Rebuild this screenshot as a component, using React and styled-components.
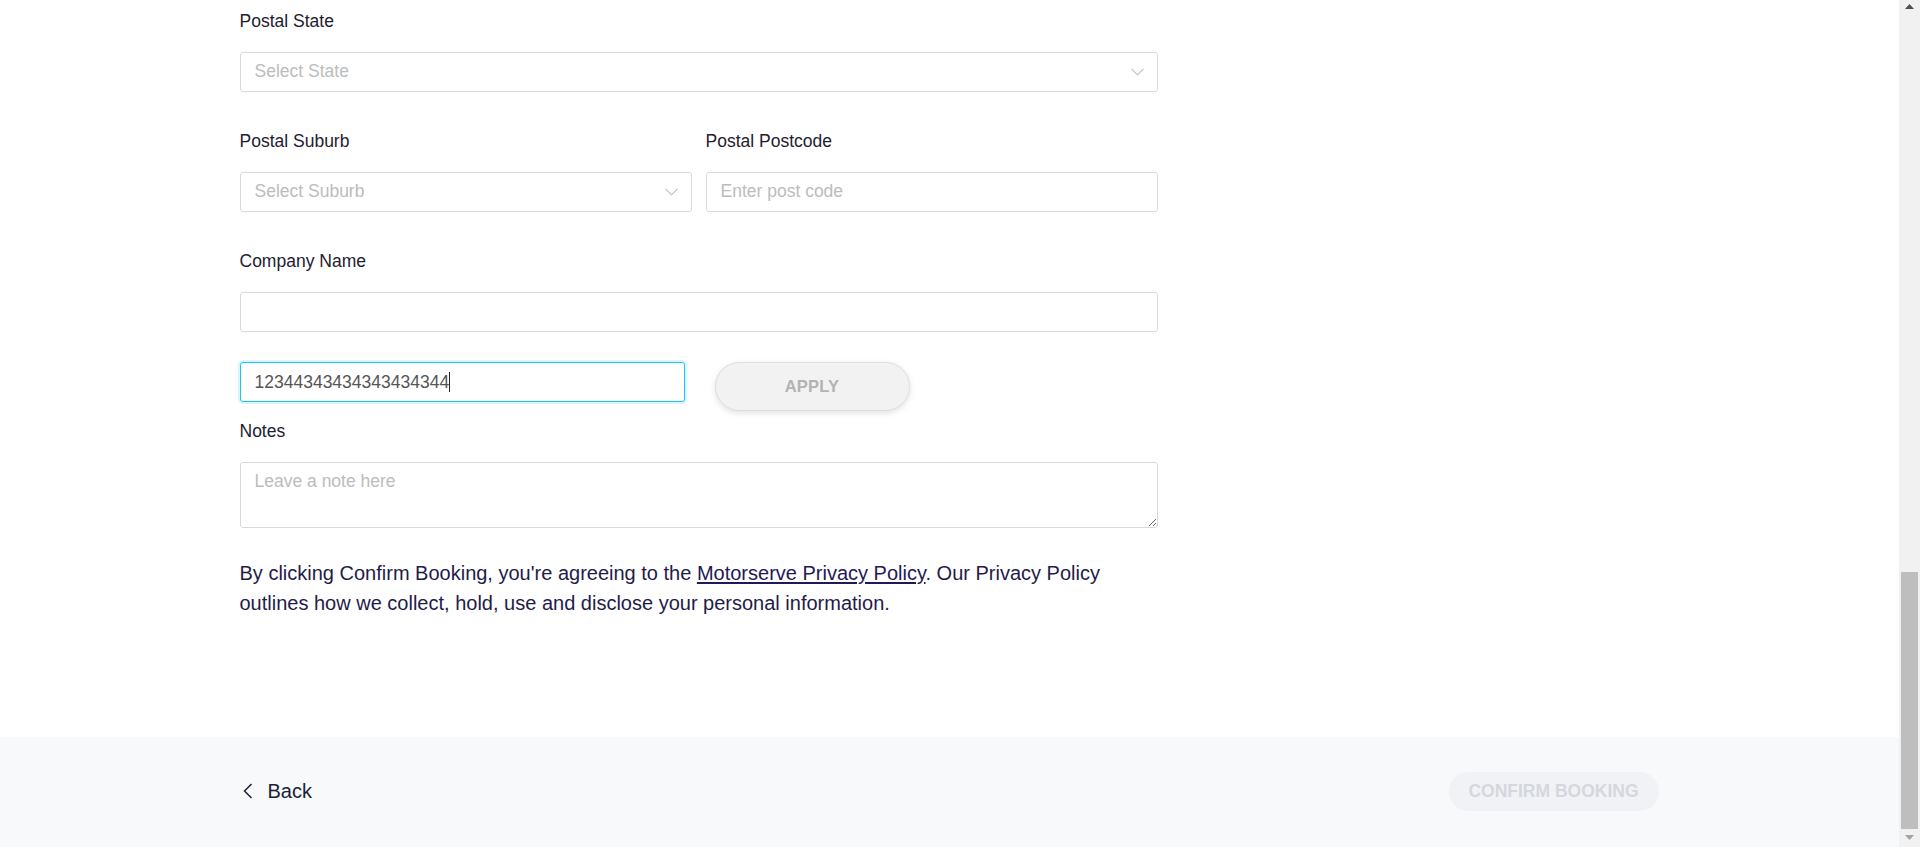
import React, { useLayoutEffect, useRef } from "react";
import styled, { createGlobalStyle } from "styled-components";

const GlobalStyle = createGlobalStyle`
  html, body { margin: 0; padding: 0; height: 100%; overflow: hidden; }
  body { font-family: "Liberation Sans", Arial, sans-serif; color: #1f2235; background: #fff; }
  * { box-sizing: border-box; }
`;

const Shell = styled.div`
  display: flex;
  height: 100vh;
`;

const Viewport = styled.div`
  flex: 1;
  min-width: 0;
  overflow-y: scroll;
  background: #ffffff;
  scrollbar-width: none;
  &::-webkit-scrollbar { display: none; }
`;

const ScrollRail = styled.div`
  width: 21px;
  flex: none;
  background: #f1f1f1;
  display: flex;
  flex-direction: column;
`;

const RailArrow = styled.div`
  height: ${(p) => p.$h}px;
  display: flex;
  justify-content: center;
  align-items: ${(p) => (p.$down ? "flex-start" : "flex-end")};
  padding: ${(p) => (p.$down ? "6px 0 0" : "0 0 8px")};
`;

const RailTrack = styled.div`
  flex: 1;
  display: flex;
  flex-direction: column;
  justify-content: flex-end;
  padding: 0 2px;
`;

const RailThumb = styled.div`
  height: 257px;
  background: #bebebe;
`;

const EarlierSteps = styled.div`
  height: 1833px;
`;

const Container = styled.div`
  width: 1420px;
  max-width: 100%;
  margin: 0 auto;
`;

const Form = styled.form`
  width: 918px;
  padding-top: 11px;
  padding-bottom: 119px;
  display: flex;
  flex-direction: column;
`;

const Field = styled.div`
  display: flex;
  flex-direction: column;
  margin-bottom: ${(p) => p.$gap ?? 39}px;
  flex: ${(p) => (p.$grow ? 1 : "none")};
  min-width: 0;
`;

const Row = styled.div`
  display: flex;
  gap: 14px;
  margin-bottom: ${(p) => p.$gap ?? 39}px;
`;

const Label = styled.label`
  font-size: 17.5px;
  line-height: 20px;
  color: #1f2030;
  margin-bottom: 21px;
`;

const inputBase = `
  width: 100%;
  border: 1px solid #d9d9d9;
  border-radius: 3px;
  background: #fff;
  font-family: "Liberation Sans", Arial, sans-serif;
  font-size: 17.5px;
  color: #555;
  outline: none;
  &::placeholder { color: #bcbcbc; }
`;

const TextInput = styled.input`
  ${inputBase}
  height: 40px;
  padding: 0 14px 1px;
`;

const SelectBox = styled.div`
  ${inputBase}
  height: 40px;
  padding: 0 13px 1px 14px;
  display: flex;
  align-items: center;
  justify-content: space-between;
  cursor: pointer;
`;

const Placeholder = styled.span`
  color: #bcbcbc;
`;

const CouponRow = styled.div`
  display: flex;
  align-items: flex-start;
  gap: 30px;
  margin-bottom: 10px;
`;

const CouponWrap = styled.div`
  position: relative;
  width: 445px;
  flex: none;
`;

const CouponInput = styled.input`
  ${inputBase}
  height: 40px;
  padding: 0 14px;
  border-color: #1ec5ec;
  box-shadow: 0 0 0 2px rgba(30, 197, 236, 0.18);
  color: #555;
  caret-color: transparent;
`;

const Caret = styled.span`
  position: absolute;
  top: 10px;
  width: 1px;
  height: 20px;
  background: #222;
  pointer-events: none;
`;

const ApplyButton = styled.button`
  width: 195px;
  height: 49px;
  border-radius: 25px;
  border: 1px solid #dedede;
  background: #f2f2f2;
  box-shadow: 0 2px 6px rgba(0, 0, 0, 0.12);
  font-family: "Liberation Sans", Arial, sans-serif;
  font-weight: 700;
  font-size: 16.5px;
  color: #b3b3b3;
  letter-spacing: 0.2px;
  cursor: not-allowed;
`;

const TextArea = styled.textarea`
  ${inputBase}
  height: 66px;
  padding: 6px 14px;
  line-height: 24px;
  resize: vertical;
  display: block;
`;

const Consent = styled.p`
  margin: 0;
  font-size: 20px;
  line-height: 30px;
  color: #1f1c48;
`;

const ConsentLine = styled.span`
  display: block;
`;

const PolicyLink = styled.a`
  color: #231a55;
  text-decoration: underline;
  text-underline-offset: 2px;
`;

const Footer = styled.footer`
  background: #f8f9fb;
  height: 110px;
  display: flex;
  align-items: center;
`;

const FooterInner = styled(Container)`
  display: flex;
  align-items: center;
  justify-content: space-between;
  margin-top: -2px;
`;

const BackLink = styled.a`
  display: flex;
  align-items: center;
  gap: 15px;
  font-size: 20px;
  line-height: 24px;
  color: #1a1f36;
  text-decoration: none;
  padding-left: 2px;
  cursor: pointer;
`;

const ConfirmButton = styled.button`
  height: 39px;
  width: 210px;
  border: none;
  border-radius: 20px;
  background: #f1f2f5;
  font-family: "Liberation Sans", Arial, sans-serif;
  font-weight: 700;
  font-size: 17.5px;
  color: #d4d7dd;
  cursor: not-allowed;
  margin-right: 1px;
`;

const Chevron = () => (
  <svg width="13" height="8" viewBox="0 0 13 8" fill="none">
    <path d="M0.5 0.8 L6.5 6.8 L12.5 0.8" stroke="#bdbdbd" strokeWidth="1.1" />
  </svg>
);

const BackChevron = () => (
  <svg width="11" height="16" viewBox="0 0 11 16" fill="none">
    <path d="M9.5 1 L2.5 8 L9.5 15" stroke="#1a1f36" strokeWidth="1.5" />
  </svg>
);

const RailTriangle = ({ down, color }) => (
  <svg width="9" height="5" viewBox="0 0 9 5">
    <path d={down ? "M0 0 L9 0 L4.5 5 Z" : "M0 5 L9 5 L4.5 0 Z"} fill={color} />
  </svg>
);

function Select({ placeholder }) {
  return (
    <SelectBox>
      <Placeholder>{placeholder}</Placeholder>
      <Chevron />
    </SelectBox>
  );
}

const COUPON = "12344343434343434344";

export default function App() {
  const viewRef = useRef(null);
  const caretLeft = 15 + COUPON.length * 0.556 * 17.5;

  useLayoutEffect(() => {
    const v = viewRef.current;
    if (v) v.scrollTop = v.scrollHeight;
  }, []);

  return (
    <>
      <GlobalStyle />
      <Shell>
        <Viewport ref={viewRef}>
          <EarlierSteps />
          <Container>
            <Form onSubmit={(e) => e.preventDefault()}>
              <Field>
                <Label>Postal State</Label>
                <Select placeholder="Select State" />
              </Field>
              <Row>
                <Field $gap={0} $grow>
                  <Label>Postal Suburb</Label>
                  <Select placeholder="Select Suburb" />
                </Field>
                <Field $gap={0} $grow>
                  <Label>Postal Postcode</Label>
                  <TextInput placeholder="Enter post code" />
                </Field>
              </Row>
              <Field $gap={30}>
                <Label>Company Name</Label>
                <TextInput />
              </Field>
              <CouponRow>
                <CouponWrap>
                  <CouponInput defaultValue={COUPON} />
                  <Caret style={{ left: `${caretLeft}px` }} />
                </CouponWrap>
                <ApplyButton type="button">APPLY</ApplyButton>
              </CouponRow>
              <Field $gap={30}>
                <Label>Notes</Label>
                <TextArea placeholder="Leave a note here" />
              </Field>
              <Consent>
                <ConsentLine>
                  <span>By clicking Confirm Booking, you're agreeing to the </span>
                  <PolicyLink href="#">Motorserve Privacy Policy</PolicyLink>
                  <span>. Our Privacy Policy</span>
                </ConsentLine>
                <ConsentLine>
                  outlines how we collect, hold, use and disclose your personal information.
                </ConsentLine>
              </Consent>
            </Form>
          </Container>
          <Footer>
            <FooterInner>
              <BackLink>
                <BackChevron />
                Back
              </BackLink>
              <ConfirmButton type="button">CONFIRM BOOKING</ConfirmButton>
            </FooterInner>
          </Footer>
        </Viewport>
        <ScrollRail aria-hidden="true">
          <RailArrow $h={17}>
            <RailTriangle color="#505050" />
          </RailArrow>
          <RailTrack>
            <RailThumb />
          </RailTrack>
          <RailArrow $h={18} $down>
            <RailTriangle down color="#a3a3a3" />
          </RailArrow>
        </ScrollRail>
      </Shell>
    </>
  );
}
